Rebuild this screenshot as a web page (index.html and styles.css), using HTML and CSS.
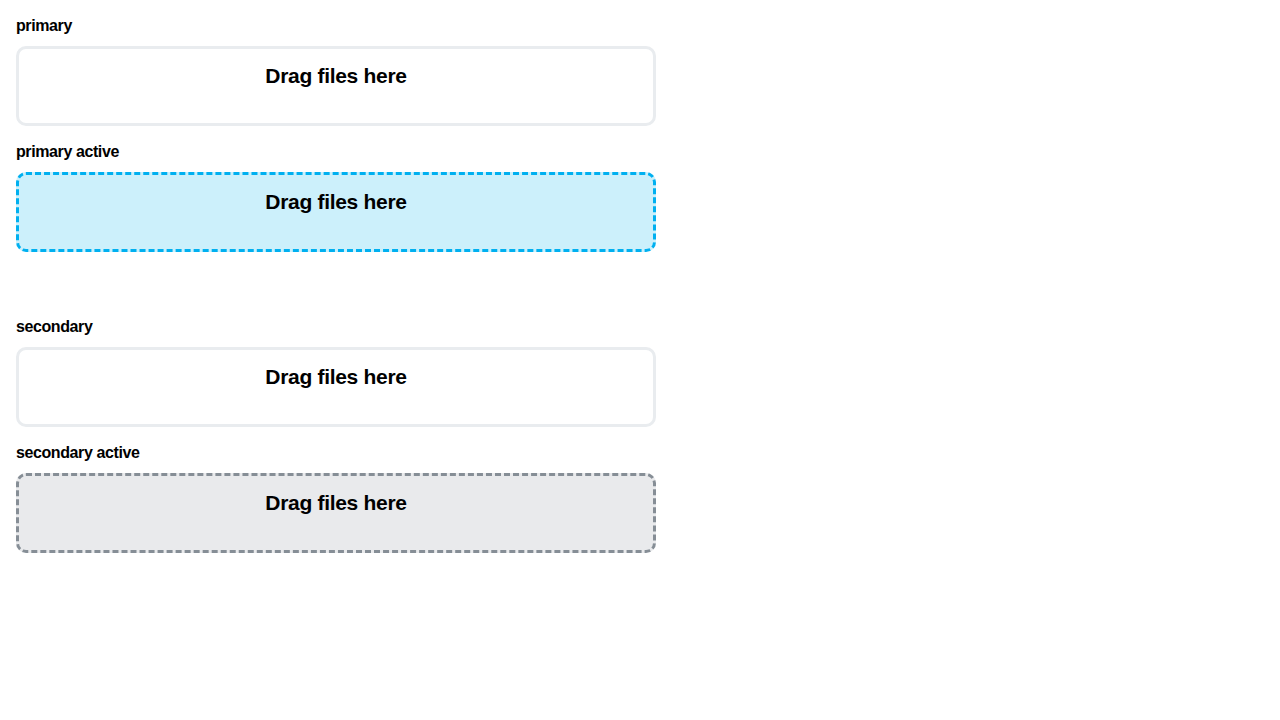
FILE: index.html
```html
<!DOCTYPE html>
<html>
<head>
<meta charset="utf-8">
<link rel="stylesheet" href="styles.css">
</head>
<body>
<div class="page">
  <section class="group">
    <div class="item">
      <div class="label">primary</div>
      <div class="drop">Drag files here</div>
    </div>
    <div class="item">
      <div class="label">primary active</div>
      <div class="drop drop-primary-active">Drag files here</div>
    </div>
  </section>
  <section class="group">
    <div class="item">
      <div class="label">secondary</div>
      <div class="drop">Drag files here</div>
    </div>
    <div class="item">
      <div class="label">secondary active</div>
      <div class="drop drop-secondary-active">Drag files here</div>
    </div>
  </section>
</div>
</body>
</html>
```
FILE: styles.css
```css
html, body {
  margin: 0;
  padding: 0;
  background: #ffffff;
}
body {
  font-family: "Liberation Sans", Arial, sans-serif;
  color: #000000;
}
.page {
  padding: 16px;
  display: flex;
  flex-direction: column;
  gap: 65px;
}
.group {
  display: flex;
  flex-direction: column;
  gap: 16px;
  width: 640px;
}
.item {
  display: flex;
  flex-direction: column;
  gap: 11px;
}
.label {
  padding-top: 1px;
  font-size: 16px;
  font-weight: bold;
  line-height: 18px;
  letter-spacing: -0.4px;
}
.drop {
  box-sizing: border-box;
  height: 80px;
  border: 3px solid #e9ecef;
  border-radius: 10px;
  padding-top: 14px;
  text-align: center;
  font-size: 21px;
  font-weight: bold;
  line-height: 26px;
  letter-spacing: -0.3px;
}
.drop-primary-active {
  border: 3px dashed #00b0f0;
  background: #ccf0fb;
}
.drop-secondary-active {
  border: 3px dashed #868e96;
  background: #e9eaec;
}
```
